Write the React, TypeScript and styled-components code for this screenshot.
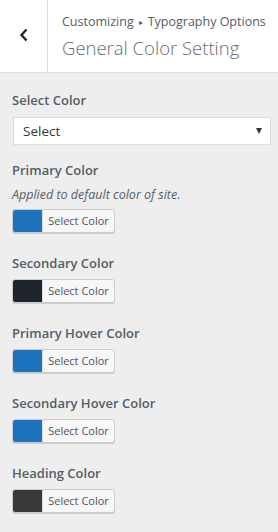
import React from "react";
import styled, { createGlobalStyle } from "styled-components";

const Global = createGlobalStyle`
  html, body { margin: 0; padding: 0; background: #eeeeee; }
  body { font-family: "Open Sans", "Noto Sans", sans-serif; -webkit-font-smoothing: antialiased; }
  * { box-sizing: border-box; }
`;

const Panel = styled.div`
  width: 278px;
  height: 532px;
  background: #eeeeee;
  overflow: hidden;
`;

const Header = styled.header`
  display: flex;
  height: 73px;
  background: #ffffff;
  border-bottom: 1px solid #dddddd;
`;

const BackButton = styled.button`
  width: 48px;
  flex: none;
  display: flex;
  align-items: center;
  justify-content: center;
  background: #ffffff;
  border: none;
  border-right: 1px solid #dddddd;
  padding: 0 0 2px 0;
  color: #23282d;
`;

const TitleBlock = styled.div`
  display: flex;
  flex-direction: column;
  padding: 13px 0 0 14px;
  white-space: nowrap;
`;

const Crumbs = styled.span`
  display: flex;
  align-items: center;
  font-size: 12.5px;
  line-height: 18px;
  color: #555d66;
`;

const Sep = styled.span`
  font-size: 8px;
  margin: 0 5px;
  color: #555d66;
`;

const Title = styled.h1`
  margin: 4px 0 0;
  font-size: 18.5px;
  line-height: 26px;
  font-weight: 300;
  color: #666c72;
`;

const Body = styled.div`
  display: flex;
  flex-direction: column;
  padding: 17px 7px 0 12px;
`;

const Control = styled.div<{ $gap?: number }>`
  display: flex;
  flex-direction: column;
  margin-bottom: ${(p) => p.$gap ?? 20}px;
`;

const Label = styled.span<{ $space?: number }>`
  font-size: 13px;
  line-height: 20px;
  font-weight: 600;
  color: #555d66;
  margin-bottom: ${(p) => p.$space ?? 6}px;
`;

const Description = styled.span`
  font-size: 12.5px;
  line-height: 18px;
  font-style: italic;
  color: #555d66;
  margin: 0 0 5px;
`;

const SelectBox = styled.div`
  position: relative;
  display: flex;
  align-items: center;
  height: 28px;
  margin-left: 1px;
  background: #ffffff;
  border: 1px solid #dddddd;
  padding: 0 0 0 9px;
  font-size: 13.5px;
  color: #32373c;
`;

const Arrow = styled.span`
  position: absolute;
  right: 8px;
  top: 10px;
  width: 0;
  height: 0;
  border-left: 3px solid transparent;
  border-right: 3px solid transparent;
  border-top: 6px solid #32373c;
`;

const ColorButton = styled.button`
  display: flex;
  align-items: stretch;
  width: 103px;
  height: 24px;
  padding: 0;
  border: 1px solid #cccccc;
  border-radius: 3px;
  background: #f7f7f7;
  box-shadow: 0 1px 0 #cccccc;
  overflow: hidden;
  font-family: inherit;
`;

const Swatch = styled.span<{ $color: string }>`
  width: 30px;
  flex: none;
  background: ${(p) => p.$color};
  border-right: 1px solid #dddddd;
`;

const ButtonText = styled.span`
  flex: 1;
  display: flex;
  align-items: center;
  justify-content: center;
  font-size: 11px;
  color: #555555;
  padding-bottom: 1px;
`;

const colors = [
  { label: "Primary Color", desc: "Applied to default color of site.", color: "#1e73be" },
  { label: "Secondary Color", color: "#1d242c" },
  { label: "Primary Hover Color", color: "#1e73be" },
  { label: "Secondary Hover Color", color: "#1e73be" },
  { label: "Heading Color", color: "#393939" },
];

export default function App() {
  return (
    <Panel>
      <Global />
      <Header>
        <BackButton aria-label="Back">
          <svg width="10" height="14" viewBox="0 0 10 14">
            <path d="M7.5 1.5 L2.5 7 L7.5 12.5" fill="none" stroke="#23282d" strokeWidth="2.4" />
          </svg>
        </BackButton>
        <TitleBlock>
          <Crumbs>
            Customizing<Sep>▸</Sep>Typography Options
          </Crumbs>
          <Title>General Color Setting</Title>
        </TitleBlock>
      </Header>
      <Body>
        <Control $gap={15}>
          <Label $space={7}>Select Color</Label>
          <SelectBox>
            Select
            <Arrow />
          </SelectBox>
        </Control>
        {colors.map((c) => (
          <Control key={c.label}>
            <Label>{c.label}</Label>
            {c.desc && <Description>{c.desc}</Description>}
            <ColorButton>
              <Swatch $color={c.color} />
              <ButtonText>Select Color</ButtonText>
            </ColorButton>
          </Control>
        ))}
      </Body>
    </Panel>
  );
}
